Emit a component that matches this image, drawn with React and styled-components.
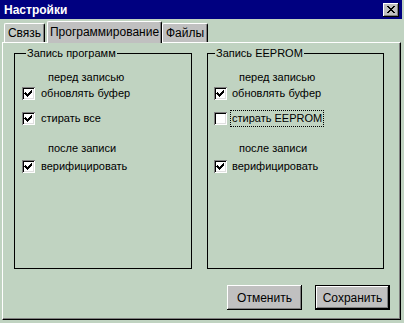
import React from 'react';
import styled, { createGlobalStyle } from 'styled-components';

const Global = createGlobalStyle`
	html, body {
		margin: 0;
		padding: 0;
		background: #c0d3c1;
	}
	* {
		box-sizing: border-box;
	}
`

const Window = styled.div`
	width: 404px;
	height: 323px;
	background: #c0d3c1;
	display: flex;
	flex-direction: column;
	font-family: "Liberation Sans", Arial, sans-serif;
	font-size: 11px;
	color: #000;
	overflow: hidden;
`

const TitleBar = styled.header`
	height: 19px;
	margin-right: 2px;
	background: #000080;
	display: flex;
	align-items: center;
	justify-content: space-between;
	padding: 0 3px 0 4px;
	h1 {
		margin: 0;
		font-size: 12px;
		font-weight: bold;
		color: #fff;
	}
`

const CloseButton = styled.button`
	width: 16px;
	height: 14px;
	padding: 0;
	border: none;
	background: #c0c0c0;
	box-shadow: inset -1px -1px 0 #000, inset 1px 1px 0 #fff, inset -2px -2px 0 #808080;
	display: flex;
	align-items: center;
	justify-content: center;
`

const TabStrip = styled.nav`
	height: 23px;
	display: flex;
	align-items: flex-end;
	padding-left: 4px;
	position: relative;
	z-index: 1;
`

const Tab = styled.div`
	width: ${p => p.$w}px;
	height: ${p => (p.$active ? 22 : 19)}px;
	margin-bottom: ${p => (p.$active ? -1 : 0)}px;
	margin-right: ${p => p.$gap || 0}px;
	background: ${p => p.$bg || '#c0c0c0'};
	border-top: 1px solid #fff;
	border-left: 1px solid #fff;
	border-right: 1px solid #000;
	border-radius: 2px 2px 0 0;
	box-shadow: inset -1px 0 0 #808080;
	display: flex;
	align-items: center;
	justify-content: center;
	font-size: 12px;
	padding-bottom: ${p => (p.$active ? 1 : 0)}px;
	white-space: nowrap;
`

const Panel = styled.section`
	flex: 1;
	margin: 0 3px 3px 2px;
	border-top: 1px solid #fff;
	border-left: 1px solid #fff;
	border-right: 1px solid #000;
	border-bottom: 1px solid #000;
	box-shadow: inset -1px -1px 0 #808080;
	padding: 3px 0 0 11px;
	display: flex;
	flex-direction: column;
`

const Groups = styled.div`
	display: grid;
	grid-template-columns: 178px 177px;
	column-gap: 15px;
`

const GroupBox = styled.fieldset`
	margin: 0;
	min-width: 0;
	height: 223px;
	border: 1px solid #000;
	padding: 9px 0 0 ${p => (p.$tight ? 6 : 7)}px;
	legend {
		margin-left: ${p => (p.$tight ? 1 : 4)}px;
		padding: 0 1px;
		line-height: 14px;
	}
`

const Heading = styled.div`
	line-height: 16px;
	height: 16px;
	padding-left: ${p => (p.$tight ? 25 : 26)}px;
	margin-top: ${p => p.$top || 0}px;
`

const CheckRow = styled.label`
	height: 16px;
	display: flex;
	align-items: center;
	gap: ${p => (p.$tight ? 5 : 6)}px;
	margin-top: ${p => p.$top || 0}px;
	span {
		line-height: 15px;
		padding: 0 1px;
		margin-left: -1px;
		outline: ${p => (p.$focus ? '1px dotted #000' : 'none')};
	}
`

const Box = styled.div`
	width: 13px;
	height: 13px;
	flex: none;
	background: #fff;
	box-shadow: inset 1px 1px 0 #808080, inset -1px -1px 0 #fff, inset 2px 2px 0 #000, inset -2px -2px 0 #dfdfdf;
	svg {
		display: block;
	}
`

const ButtonRow = styled.div`
	display: flex;
	justify-content: flex-end;
	gap: 13px;
	margin-top: 16px;
	padding-right: 10px;
`

const Button = styled.button`
	width: 75px;
	height: 25px;
	padding: 0;
	font-family: inherit;
	font-size: 12px;
	color: #000;
	background: #c0c0c0;
	border: ${p => (p.$default ? '1px solid #000' : 'none')};
	box-shadow: inset -1px -1px 0 #000, inset 1px 1px 0 #fff, inset -2px -2px 0 #808080;
`

const closeMask = [
	'XX....XX',
	'.XX..XX.',
	'..XXXX..',
	'...XX...',
	'..XXXX..',
	'.XX..XX.',
	'XX....XX',
]

function CloseGlyph() {
	return (
		<svg width="8" height="7" viewBox="0 0 8 7" shapeRendering="crispEdges">
			{closeMask.map((row, y) => row.split('').map((c, x) => (
				c === 'X' ? <rect key={y + '-' + x} x={x} y={y} width="1" height="1" fill="#000" /> : null
			)))}
		</svg>
	)
}

function Check({ on }) {
	return (
		<Box>
			{on && (
				<svg width="13" height="13" viewBox="0 0 13 13" shapeRendering="crispEdges">
					<path d="M3 5h1v1h1v1h1v-1h1v-1h1v-1h1v-1h1v3h-1v1h-1v1h-1v1h-1v1h-1v-1h-1v-1h-1v-1h-1z" fill="#000" />
				</svg>
			)}
		</Box>
	)
}

const groups = [
	{ title: 'Запись программ', erase: 'стирать все', eraseOn: true, focus: false, tight: false },
	{ title: 'Запись EEPROM', erase: 'стирать EEPROM', eraseOn: false, focus: true, tight: true },
]

export default function App() {
	return (
		<Window>
			<Global />
			<TitleBar>
				<h1>Настройки</h1>
				<CloseButton><CloseGlyph /></CloseButton>
			</TitleBar>
			<TabStrip>
				<Tab $w={41} $gap={2} $bg="#c4cac4">Связь</Tab>
				<Tab $w={115} $active>Программирование</Tab>
				<Tab $w={46}>Файлы</Tab>
			</TabStrip>
			<Panel>
				<Groups>
					{groups.map(g => (
						<GroupBox key={g.title} $tight={g.tight}>
							<legend>{g.title}</legend>
							<Heading $tight={g.tight}>перед записью</Heading>
							<CheckRow $tight={g.tight}><Check on /><span>обновлять буфер</span></CheckRow>
							<CheckRow $tight={g.tight} $top={9} $focus={g.focus}><Check on={g.eraseOn} /><span>{g.erase}</span></CheckRow>
							<Heading $tight={g.tight} $top={14}>после записи</Heading>
							<CheckRow $tight={g.tight} $top={2}><Check on /><span>верифицировать</span></CheckRow>
						</GroupBox>
					))}
				</Groups>
				<ButtonRow>
					<Button>Отменить</Button>
					<Button $default>Сохранить</Button>
				</ButtonRow>
			</Panel>
		</Window>
	);
}
